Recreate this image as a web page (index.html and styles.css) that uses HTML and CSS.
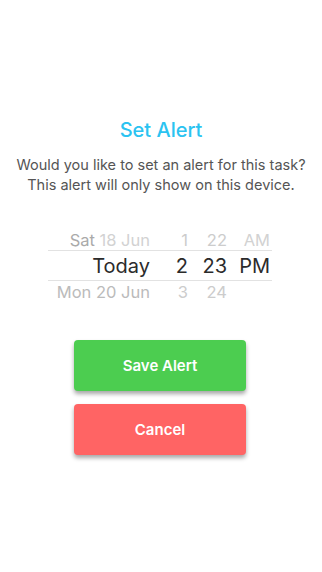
FILE: index.html
```html
<!DOCTYPE html>
<html lang="en">
<head>
  <meta charset="UTF-8" />
  <title>Set Alert</title>
  <meta name="viewport" content="width=device-width, initial-scale=1.0" />
  <link rel="stylesheet" href="styles.css">
</head>
<body>
  <div class="screen">
    <h1 class="title">Set Alert</h1>
    <p class="desc">Would you like to set an alert for this task?<br>This alert will only show on this device.</p>

    <div class="picker">
      <div class="row side">
        <span class="c-date"><span class="dim1">Sat</span> <span class="dim2">18 Jun</span></span><span class="c-hour">1</span><span class="c-min">22</span><span class="c-ampm dim2">AM</span>
      </div>
      <div class="row current">
        <span class="c-date">Today</span><span class="c-hour">2</span><span class="c-min">23</span><span class="c-ampm">PM</span>
      </div>
      <div class="row side">
        <span class="c-date">Mon 20 Jun</span><span class="c-hour">3</span><span class="c-min">24</span><span class="c-ampm"></span>
      </div>
    </div>

    <div class="actions">
      <button class="btn btn-save">Save Alert</button>
      <button class="btn btn-cancel">Cancel</button>
    </div>
  </div>
</body>
</html>
```

FILE: styles.css
```css
body {
  margin: 0;
  background: #fff;
  font-family: Inter, "Liberation Sans", sans-serif;
  color: #333;
}
.screen {
  width: 322px;
  height: 572px;
  padding-top: 118px;
  box-sizing: border-box;
}
.title {
  margin: 0;
  text-align: center;
  font-size: 20px;
  font-weight: 500;
  line-height: 24px;
  color: #2bc3f1;
}
.desc {
  margin: 13px 0 0;
  text-align: center;
  font-size: 14.5px;
  line-height: 20px;
  color: #555;
}
.picker {
  width: 224px;
  margin: 34px 0 0 48px;
}
.row {
  display: grid;
  grid-template-columns: 102px 38px 39px 45px;
  align-items: center;
  white-space: nowrap;
  box-sizing: border-box;
}
.row span {
  text-align: right;
}
.c-ampm {
  padding-right: 2px;
}
.side {
  height: 21px;
  font-size: 16.5px;
  color: #bbb;
}
.side .c-hour, .side .c-min, .side .c-ampm {
  color: #ccc;
}
.dim1 {
  color: #aaa;
}
.dim2 {
  color: #d2d2d2 !important;
}
.current {
  height: 31px;
  font-size: 20px;
  color: #2b2b2b;
  border-top: 1px solid #e2e2e2;
  border-bottom: 1px solid #e2e2e2;
}
.actions {
  display: flex;
  flex-direction: column;
  align-items: center;
  gap: 13px;
  margin-top: 38px;
}
.btn {
  width: 172px;
  height: 51px;
  border: none;
  border-radius: 4px;
  color: #fff;
  font-family: Inter, "Liberation Sans", sans-serif;
  font-size: 15px;
  font-weight: 600;
  box-shadow: 0 3px 4px rgba(0, 0, 0, 0.35);
  margin-left: -2px;
}
.btn-save {
  background: #4ccd50;
}
.btn-cancel {
  background: #ff6464;
}
```
